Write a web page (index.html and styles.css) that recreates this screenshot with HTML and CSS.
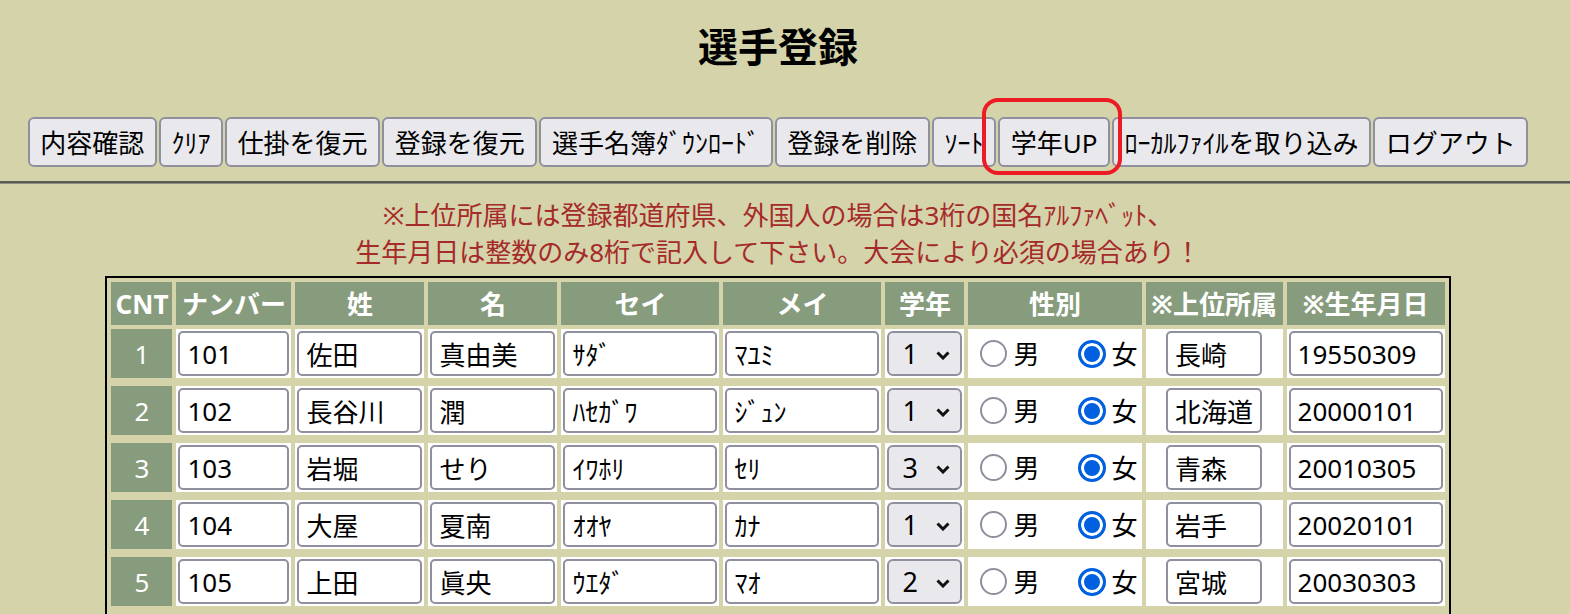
FILE: index.html
```html
<!DOCTYPE html>
<html lang="ja">
<head>
<meta charset="utf-8">
<title>選手登録</title>
<link rel="stylesheet" href="styles.css">
</head>
<body>
<div class="page">
  <h1 class="title">選手登録</h1>
  <div class="toolbar">
    <button class="btn">内容確認</button>
    <button class="btn">ｸﾘｱ</button>
    <button class="btn">仕掛を復元</button>
    <button class="btn">登録を復元</button>
    <button class="btn">選手名簿ﾀﾞｳﾝﾛｰﾄﾞ</button>
    <button class="btn">登録を削除</button>
    <button class="btn">ｿｰﾄ</button>
    <span class="hl"><button class="btn">学年UP</button><span class="hl-mark"></span></span>
    <button class="btn">ﾛｰｶﾙﾌｧｲﾙを取り込み</button>
    <button class="btn">ログアウト</button>
  </div>
</div>
<hr class="rule">
<div class="page">
  <p class="notice">※上位所属には登録都道府県、外国人の場合は3桁の国名ｱﾙﾌｧﾍﾞｯﾄ、<br>生年月日は整数のみ8桁で記入して下さい。大会により必須の場合あり！</p>
  <table class="roster">
    <thead>
      <tr>
        <th class="c-cnt">CNT</th>
        <th class="c-num">ナンバー</th>
        <th class="c-sei">姓</th>
        <th class="c-mei">名</th>
        <th class="c-kana">セイ</th>
        <th class="c-kana">メイ</th>
        <th class="c-grade">学年</th>
        <th class="c-sex">性別</th>
        <th class="c-pref">※上位所属</th>
        <th class="c-birth">※生年月日</th>
      </tr>
    </thead>
    <tbody>
      <tr>
        <td class="cnt">1</td>
        <td><input class="fld f-num" value="101"></td>
        <td><input class="fld f-name" value="佐田"></td>
        <td><input class="fld f-name" value="真由美"></td>
        <td><input class="fld f-kana" value="ｻﾀﾞ"></td>
        <td><input class="fld f-kana" value="ﾏﾕﾐ"></td>
        <td><span class="sel"><select class="grade"><option selected>1</option><option>2</option><option>3</option></select><svg class="chev" width="14" height="9" viewBox="0 0 14 9"><polyline points="1.5,1.5 7,7 12.5,1.5" fill="none" stroke="#111" stroke-width="3"/></svg></span></td>
        <td class="sex"><div class="sex-row"><label class="rb"><input type="radio" class="radio" name="s1">男</label><label class="rb rb-f"><input type="radio" class="radio" name="s1" checked>女</label></div></td>
        <td class="pref"><input class="fld f-pref" value="長崎"></td>
        <td><input class="fld f-birth" value="19550309"></td>
      </tr>
      <tr>
        <td class="cnt">2</td>
        <td><input class="fld f-num" value="102"></td>
        <td><input class="fld f-name" value="長谷川"></td>
        <td><input class="fld f-name" value="潤"></td>
        <td><input class="fld f-kana" value="ﾊｾｶﾞﾜ"></td>
        <td><input class="fld f-kana" value="ｼﾞｭﾝ"></td>
        <td><span class="sel"><select class="grade"><option selected>1</option><option>2</option><option>3</option></select><svg class="chev" width="14" height="9" viewBox="0 0 14 9"><polyline points="1.5,1.5 7,7 12.5,1.5" fill="none" stroke="#111" stroke-width="3"/></svg></span></td>
        <td class="sex"><div class="sex-row"><label class="rb"><input type="radio" class="radio" name="s2">男</label><label class="rb rb-f"><input type="radio" class="radio" name="s2" checked>女</label></div></td>
        <td class="pref"><input class="fld f-pref" value="北海道"></td>
        <td><input class="fld f-birth" value="20000101"></td>
      </tr>
      <tr>
        <td class="cnt">3</td>
        <td><input class="fld f-num" value="103"></td>
        <td><input class="fld f-name" value="岩堀"></td>
        <td><input class="fld f-name" value="せり"></td>
        <td><input class="fld f-kana" value="ｲﾜﾎﾘ"></td>
        <td><input class="fld f-kana" value="ｾﾘ"></td>
        <td><span class="sel"><select class="grade"><option>1</option><option>2</option><option selected>3</option></select><svg class="chev" width="14" height="9" viewBox="0 0 14 9"><polyline points="1.5,1.5 7,7 12.5,1.5" fill="none" stroke="#111" stroke-width="3"/></svg></span></td>
        <td class="sex"><div class="sex-row"><label class="rb"><input type="radio" class="radio" name="s3">男</label><label class="rb rb-f"><input type="radio" class="radio" name="s3" checked>女</label></div></td>
        <td class="pref"><input class="fld f-pref" value="青森"></td>
        <td><input class="fld f-birth" value="20010305"></td>
      </tr>
      <tr>
        <td class="cnt">4</td>
        <td><input class="fld f-num" value="104"></td>
        <td><input class="fld f-name" value="大屋"></td>
        <td><input class="fld f-name" value="夏南"></td>
        <td><input class="fld f-kana" value="ｵｵﾔ"></td>
        <td><input class="fld f-kana" value="ｶﾅ"></td>
        <td><span class="sel"><select class="grade"><option selected>1</option><option>2</option><option>3</option></select><svg class="chev" width="14" height="9" viewBox="0 0 14 9"><polyline points="1.5,1.5 7,7 12.5,1.5" fill="none" stroke="#111" stroke-width="3"/></svg></span></td>
        <td class="sex"><div class="sex-row"><label class="rb"><input type="radio" class="radio" name="s4">男</label><label class="rb rb-f"><input type="radio" class="radio" name="s4" checked>女</label></div></td>
        <td class="pref"><input class="fld f-pref" value="岩手"></td>
        <td><input class="fld f-birth" value="20020101"></td>
      </tr>
      <tr>
        <td class="cnt">5</td>
        <td><input class="fld f-num" value="105"></td>
        <td><input class="fld f-name" value="上田"></td>
        <td><input class="fld f-name" value="眞央"></td>
        <td><input class="fld f-kana" value="ｳｴﾀﾞ"></td>
        <td><input class="fld f-kana" value="ﾏｵ"></td>
        <td><span class="sel"><select class="grade"><option>1</option><option selected>2</option><option>3</option></select><svg class="chev" width="14" height="9" viewBox="0 0 14 9"><polyline points="1.5,1.5 7,7 12.5,1.5" fill="none" stroke="#111" stroke-width="3"/></svg></span></td>
        <td class="sex"><div class="sex-row"><label class="rb"><input type="radio" class="radio" name="s5">男</label><label class="rb rb-f"><input type="radio" class="radio" name="s5" checked>女</label></div></td>
        <td class="pref"><input class="fld f-pref" value="宮城"></td>
        <td><input class="fld f-birth" value="20030303"></td>
      </tr>
    </tbody>
  </table>
</div>
</body>
</html>
```

FILE: styles.css
```css
:root {
  --bg: #d5d3a9;
  --hd: #879c7d;
  --ctl-border: #8f8f9d;
  --ctl-bg: #e9e9ed;
}

html {
  overflow: hidden;
}

body {
  margin: 0;
  background: var(--bg);
  font-family: "Noto Sans", "Noto Sans CJK JP", sans-serif;
  color: #000;
}

.page {
  width: 1556px;
}

.title {
  margin: 0;
  padding-top: 22px;
  font-size: 40px;
  line-height: 50px;
  font-weight: 700;
  text-align: center;
}

.toolbar {
  display: flex;
  justify-content: center;
  gap: 2px;
  margin-top: 45px;
}

.btn {
  font: inherit;
  font-size: 26px;
  height: 50px;
  padding: 0 10.6px;
  margin: 0;
  border: 2px solid var(--ctl-border);
  border-radius: 6px;
  background: var(--ctl-bg);
  color: #000;
  white-space: nowrap;
}

.hl {
  position: relative;
  display: flex;
}

.hl-mark {
  position: absolute;
  left: -16px;
  right: -12px;
  top: -19px;
  bottom: -8px;
  border: 4px solid #ec1c24;
  border-radius: 16px;
  pointer-events: none;
}

.rule {
  margin: 14px 0 0;
  height: 0;
  border: 0;
  border-top: 2px solid #5b5b55;
  border-bottom: 1px solid #8e8d80;
}

.notice {
  margin: 13px 0 0;
  text-align: center;
  color: #a52a2a;
  font-size: 26px;
  line-height: 37px;
}

.roster {
  margin: 5px auto 0;
  border: 2px solid #000;
  border-spacing: 4px;
}

.roster th {
  background: var(--hd);
  color: #fff;
  font-size: 26px;
  font-weight: 700;
  height: 43px;
  padding: 0;
  line-height: 1;
  white-space: nowrap;
}

.c-cnt { width: 61px; }
.c-num { width: 115px; }
.c-sei { width: 129px; }
.c-mei { width: 129px; }
.c-kana { width: 158px; }
.c-grade { width: 79px; }
.c-sex { width: 172px; }
.c-pref { width: 137px; }
.c-birth { width: 158px; }

.roster td {
  background: #fff;
  padding: 2px;
  border-bottom: 4px solid var(--bg);
  vertical-align: middle;
  font-size: 26px;
}

.roster td.cnt {
  background: var(--hd);
  color: #fff;
  text-align: center;
}

.fld {
  display: block;
  box-sizing: border-box;
  height: 45px;
  margin: 0;
  padding: 0 7px;
  border: 2px solid var(--ctl-border);
  border-radius: 5px;
  background: #fff;
  color: #000;
  font: inherit;
  font-size: 26px;
}

.f-num { width: 111px; }
.f-name { width: 125px; }
.f-kana { width: 154px; }
.f-pref { width: 96px; margin: 0 auto; }
.f-birth { width: 154px; }

.sel {
  position: relative;
  display: block;
}

.grade {
  display: block;
  appearance: none;
  -webkit-appearance: none;
  box-sizing: border-box;
  width: 75px;
  height: 45px;
  margin: 0;
  padding: 0 13px;
  border: 2px solid var(--ctl-border);
  border-radius: 6px;
  background: var(--ctl-bg);
  color: #000;
  font: inherit;
  font-size: 27px;
}

.chev {
  position: absolute;
  right: 12px;
  top: 50%;
  margin-top: -3px;
  pointer-events: none;
}

.roster td.sex {
  padding: 2px 4px 2px 12px;
}

.sex-row {
  display: flex;
  align-items: center;
}

.rb {
  display: inline-flex;
  align-items: center;
  line-height: 1;
}

.rb-f {
  margin-left: 38px;
}

.radio {
  appearance: none;
  -webkit-appearance: none;
  box-sizing: border-box;
  width: 27px;
  height: 27px;
  margin: 0 6px 0 0;
  border: 2px solid var(--ctl-border);
  border-radius: 50%;
  background: #fff;
}

.radio:checked {
  width: 28px;
  height: 28px;
  border: 3px solid #0060df;
  background: #0060df;
  box-shadow: inset 0 0 0 3px #fff;
}
```
